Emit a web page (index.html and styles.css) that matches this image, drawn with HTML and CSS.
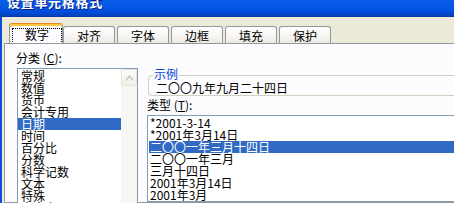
FILE: index.html
```html
<!DOCTYPE html>
<html lang="zh-CN">
<head>
<meta charset="utf-8">
<title>设置单元格格式</title>
<link rel="stylesheet" href="styles.css">
</head>
<body>
<div class="window">
  <div class="titlebar"><span class="title">设置单元格格式</span></div>
  <div class="client">
    <div class="tabs">
      <div class="tab tab-active"><span class="focus">数字</span></div>
      <div class="tab">对齐</div>
      <div class="tab">字体</div>
      <div class="tab">边框</div>
      <div class="tab">填充</div>
      <div class="tab">保护</div>
    </div>
    <div class="panel">
      <div class="col-left">
        <div class="label">分类 (<u>C</u>):</div>
        <div class="listbox cat-list">
          <ul class="items">
            <li class="item">常规</li>
            <li class="item">数值</li>
            <li class="item">货币</li>
            <li class="item">会计专用</li>
            <li class="item selected">日期</li>
            <li class="item">时间</li>
            <li class="item">百分比</li>
            <li class="item">分数</li>
            <li class="item">科学记数</li>
            <li class="item">文本</li>
            <li class="item">特殊</li>
            <li class="item">自定义</li>
          </ul>
          <div class="scrollbar">
            <div class="sb-btn">
              <svg width="9" height="6" viewBox="0 0 9 6"><polyline points="1,5 4.5,1.5 8,5" fill="none" stroke="#c6c7bd" stroke-width="1.6"/></svg>
            </div>
            <div class="sb-track"></div>
          </div>
        </div>
      </div>
      <div class="col-right">
        <div class="groupbox">
          <div class="gb-label">示例</div>
          <div class="sample">二〇〇九年九月二十四日</div>
        </div>
        <div class="label type-label">类型 (<u>T</u>):</div>
        <ul class="listbox type-list">
          <li class="item">*2001-3-14</li>
          <li class="item">*2001年3月14日</li>
          <li class="item selected">二〇〇一年三月十四日</li>
          <li class="item">二〇〇一年三月</li>
          <li class="item">三月十四日</li>
          <li class="item">2001年3月14日</li>
          <li class="item">2001年3月</li>
        </ul>
      </div>
    </div>
  </div>
</div>
</body>
</html>
```

FILE: styles.css
```css
* { box-sizing: border-box; }
html, body { margin: 0; padding: 0; }
body {
  font-family: "Noto Sans CJK SC", "Noto Sans", sans-serif;
  font-size: 12px;
  line-height: 12px;
  color: #000;
  background: #ece9d8;
}
ul { list-style: none; margin: 0; padding: 0; }
u { text-decoration: underline; text-underline-offset: 1px; }

.window {
  width: 454px;
  height: 203px;
  overflow: hidden;
  display: flex;
  flex-direction: column;
  background: #ece9d8;
}

.titlebar {
  flex: 0 0 17px;
  height: 17px;
  background: linear-gradient(#0a5de8, #0255e2 55%, #0049d2 85%, #0a3fb4);
  border-bottom: 1px solid #0a39a8;
  overflow: hidden;
  padding-left: 7px;
}
.title {
  display: block;
  margin-top: -5px;
  font-size: 13px;
  line-height: 13px;
  font-weight: bold;
  letter-spacing: 0.7px;
  color: #fff;
  text-shadow: 1px 1px 0 #0a1e8c;
}

.client {
  flex: 1 1 auto;
  border-left: 2px solid #0b4fd8;
  padding-left: 2px;
  padding-top: 6px;
  display: flex;
  flex-direction: column;
  min-height: 0;
}

.tabs {
  display: flex;
  align-items: flex-start;
  gap: 2px;
  height: 21px;
  padding-left: 5px;
  flex: 0 0 21px;
}
.tab {
  width: 52px;
  height: 17px;
  margin-top: 3px;
  border: 1px solid #919b9c;
  border-bottom: 0;
  border-radius: 3px 3px 0 0;
  background: linear-gradient(#fefefe, #f6f5f1 60%, #e9e8e1);
  text-align: center;
  padding-top: 3px;
  flex: 0 0 auto;
}
.tab-active {
  width: 54px;
  height: 21px;
  margin-top: 0;
  margin-right: -2px;
  padding: 0 0 0 2px;
  border-top: 1px solid #e68b2c;
  box-shadow: inset 0 2px 0 #ffc83c;
  background: #fcfcfe;
}
.focus {
  display: block;
  margin-top: 4px;
  height: 16px;
  border: 1px dotted #000;
  text-align: center;
}

.panel {
  margin-top: -1px;
  width: 470px;
  flex: 1 1 auto;
  background: #fcfcfe;
  border: 1px solid #919b9c;
  display: flex;
  padding: 8px 0 0 11px;
  min-height: 0;
}

.col-left {
  width: 122px;
  flex: 0 0 122px;
  display: flex;
  flex-direction: column;
}
.label { height: 12px; white-space: nowrap; }

.listbox {
  background: #fff;
  border: 1px solid #7f9db9;
}
.item {
  height: 12px;
  line-height: 12px;
  white-space: nowrap;
}
.item.selected {
  background: #316ac5;
  color: #fff;
}

.cat-list {
  margin: 4px 0 0 1px;
  width: 121px;
  height: 160px;
  display: flex;
}
.cat-list .items {
  flex: 1 1 auto;
  padding-top: 1px;
}
.cat-list .item { padding-left: 3px; }

.scrollbar {
  width: 16px;
  flex: 0 0 16px;
  display: flex;
  flex-direction: column;
  background: #f6f6f2;
}
.sb-btn {
  height: 17px;
  border: 1px solid #e3e4dc;
  border-radius: 2px;
  background: linear-gradient(#fbfbf8, #efefe8);
  display: flex;
  align-items: center;
  justify-content: center;
}
.sb-track { flex: 1 1 auto; }

.col-right {
  margin-left: 9px;
  flex: 0 0 320px;
  display: flex;
  flex-direction: column;
  padding-top: 23px;
}
.groupbox {
  margin-left: 1px;
  height: 28px;
  border: 1px solid #d0d0bf;
  border-radius: 4px;
}
.gb-label {
  width: fit-content;
  margin: -8px 0 0 4px;
  padding: 0 1px;
  background: #fcfcfe;
  color: #0046d5;
}
.sample {
  margin-top: 2px;
  padding-left: 7px;
  white-space: nowrap;
}
.type-label { margin-top: 3px; }
.type-list {
  margin-top: 4px;
  height: 90px;
  padding: 1px 1px 0 1px;
}
.type-list .item { padding-left: 1px; }
```
